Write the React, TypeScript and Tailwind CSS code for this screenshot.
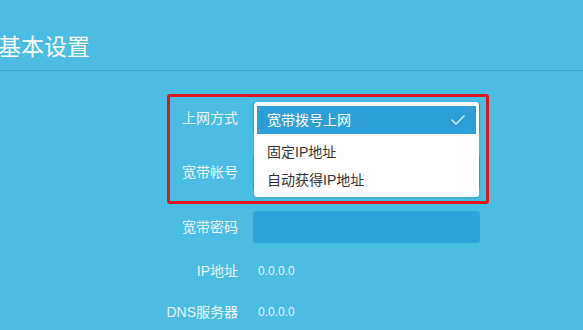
const font = { fontFamily: "'Liberation Sans', 'Noto Sans CJK SC', sans-serif" };

function Check() {
  return (
    <svg width="14" height="10" viewBox="0 0 14 10" fill="none" className="shrink-0">
      <polyline points="1,5 5,9 13,1" stroke="#d4eefa" strokeWidth="1.6" strokeLinecap="round" strokeLinejoin="round" />
    </svg>
  );
}

function ModeMenu() {
  const options = ["固定IP地址", "自动获得IP地址"];
  return (
    <div className="absolute left-[1px] top-0 z-10 w-[225px] rounded-[3px] bg-white px-[3px] pt-[4px] pb-[3px] shadow-[0_1px_3px_rgba(0,0,0,0.15)]">
      <div className="flex h-[28px] items-center justify-between bg-[#2d9fd6] pl-[10px] pr-[11px] text-[14px] text-white">
        <span>宽带拨号上网</span>
        <Check />
      </div>
      <ul className="mt-[4px]">
        {options.map((o) => (
          <li key={o} className="flex h-[28px] items-center pl-[10px] text-[14px] text-[#333333]">
            {o}
          </li>
        ))}
      </ul>
    </div>
  );
}

export default function App() {
  return (
    <div className="h-[330px] w-full overflow-hidden bg-[#4bbce2]" style={font}>
      <div className="border-b border-[#3aa8d2] pt-[32px] pb-[8px]">
        <h1 className="-ml-[2px] text-[23px] leading-[30px] text-white">基本设置</h1>
      </div>

      <div className="mt-[23px] ml-[167px] w-[322px] rounded-[3px] border-[3px] border-[#dc1620] pt-[4px] pb-[12px]">
        <div className="flex h-[34px] items-center gap-[15px]">
          <span className="w-[68px] text-right text-[14px] text-[#eef8fc]">上网方式</span>
          <div className="relative h-[32px] w-[227px] rounded-[3px] bg-[#2ea2d8]">
            <ModeMenu />
          </div>
        </div>
        <div className="mt-[20px] flex h-[34px] items-center gap-[15px]">
          <span className="w-[68px] text-right text-[14px] text-[#eef8fc]">宽带帐号</span>
          <div className="h-[32px] w-[227px] rounded-[3px] bg-[#2ea2d8]" />
        </div>
      </div>

      <div className="mt-[7px] ml-[150px] flex h-[32px] items-center gap-[15px]">
        <span className="w-[88px] text-right text-[14px] text-[#eef8fc]">宽带密码</span>
        <div className="h-[32px] w-[227px] rounded-[3px] bg-[#2ea2d8]" />
      </div>

      <div className="mt-[18px] ml-[150px] flex h-[20px] items-center gap-[20px]">
        <span className="w-[88px] text-right text-[14px] text-[#eef8fc]">IP地址</span>
        <span className="text-[12px] text-[#eef8fc]">0.0.0.0</span>
      </div>

      <div className="mt-[21px] ml-[150px] flex h-[20px] items-center gap-[20px]">
        <span className="w-[88px] text-right text-[14px] whitespace-nowrap text-[#eef8fc]">DNS服务器</span>
        <span className="text-[12px] text-[#eef8fc]">0.0.0.0</span>
      </div>
    </div>
  );
}
